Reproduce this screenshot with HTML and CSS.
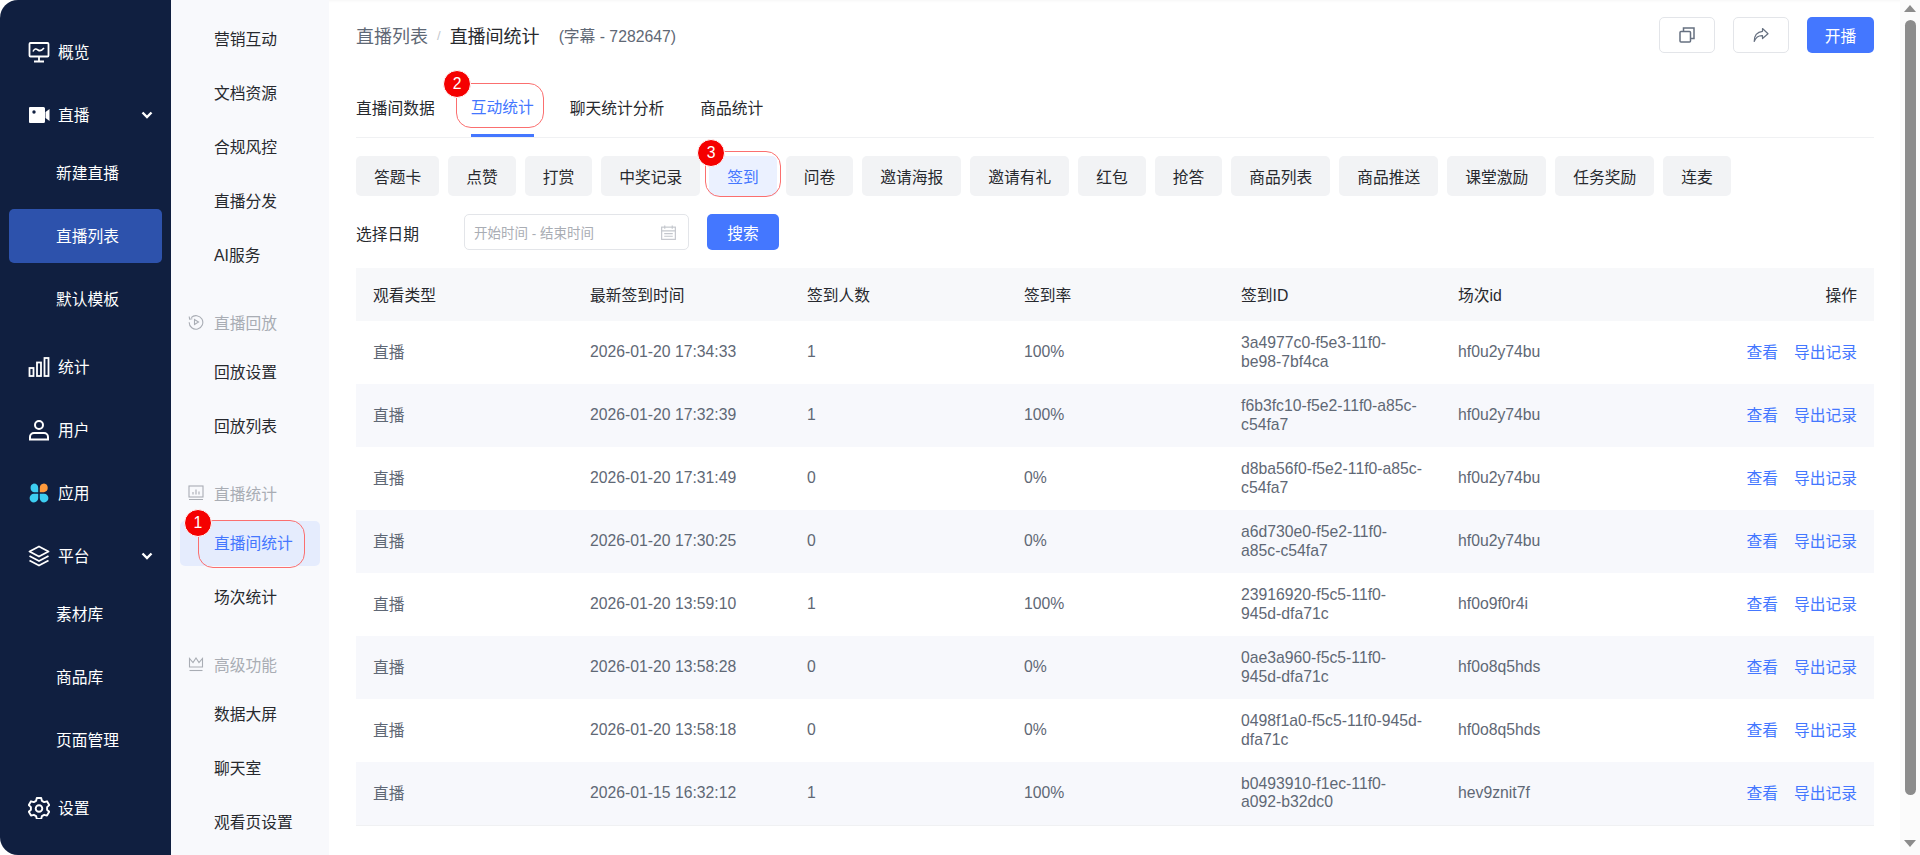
FILE: index.html
```html
<!DOCTYPE html>
<html lang="zh-CN">
<head>
    <meta charset="UTF-8">
    <meta name="viewport" content="width=device-width, initial-scale=1.0">
    <title>直播间统计</title>
    <link rel="stylesheet" href="styles.css">
</head>
<body>
    <div class="app">
        <!-- Main nav -->
        <nav class="sidebar">
            <a class="nav-item">
                <svg class="nav-icon" viewBox="0 0 22 22" fill="none" stroke="#fff" stroke-width="1.8"><rect x="1.5" y="2" width="19" height="13.5" rx="1"/><path d="M5 10.5c1.5-3 3-3 5-1.5s3.5 1 6-2" stroke-width="1.6"/><path d="M11 15.5v5M6 20.5h10"/></svg>
                <span>概览</span>
            </a>
            <a class="nav-item">
                <svg class="nav-icon" viewBox="0 0 22 22"><path fill="#fff" d="M2 3h13.500a1.500 1.500 0 0 1 1.500 1.500v13a1.500 1.500 0 0 1-1.500 1.500H2a1 1 0 0 1-1-1V4a1 1 0 0 1 1-1zm15.500 5 4-3v12l-4-3z"/><circle cx="6" cy="8" r="1.700" fill="#101f40"/></svg>
                <span>直播</span>
                <svg class="chevron" viewBox="0 0 12 8" fill="none" stroke="#fff" stroke-width="2.400"><path d="M1.500 1.500 6 6l4.500-4.500"/></svg>
            </a>
            <div class="nav-sub">
                <a class="sub-item">新建直播</a>
                <a class="sub-item active">直播列表</a>
                <a class="sub-item">默认模板</a>
            </div>
            <a class="nav-item">
                <svg class="nav-icon" viewBox="0 0 22 22" fill="none" stroke="#fff" stroke-width="1.800"><rect x="1.500" y="12" width="4" height="8"/><rect x="9" y="6.500" width="4" height="13.500"/><rect x="16.500" y="2" width="4" height="18"/></svg>
                <span>统计</span>
            </a>
            <a class="nav-item">
                <svg class="nav-icon" viewBox="0 0 22 22" fill="none" stroke="#fff" stroke-width="2"><circle cx="11" cy="6" r="4"/><path d="M2 20.500v-2.500a4 4 0 0 1 4-4h10a4 4 0 0 1 4 4v2.500z"/></svg>
                <span>用户</span>
            </a>
            <a class="nav-item">
                <svg class="nav-icon" viewBox="0 0 22 22"><path fill="#3dcdf1" d="M5.800 1.500a4.600 4.600 0 0 1 4.400 4.500v4.200H6A4.500 4.500 0 0 1 5.800 1.500zM6 11.800h4.200V16A4.300 4.300 0 1 1 6 11.800zM11.800 11.800H16a4.300 4.300 0 1 1-4.200 4.300z"/><path fill="#ff9a3c" d="M16 1.500a4.400 4.400 0 0 1 0 8.700h-4.200V6A4.500 4.500 0 0 1 16 1.500z"/></svg>
                <span>应用</span>
            </a>
            <a class="nav-item">
                <svg class="nav-icon" viewBox="0 0 22 22" fill="none" stroke="#fff" stroke-width="1.800" stroke-linejoin="round"><path d="M11 1.500 20.500 6.500 11 11.500 1.500 6.500z"/><path d="M1.500 11 11 16l9.500-5M1.500 15.500 11 20.500l9.500-5"/></svg>
                <span>平台</span>
                <svg class="chevron" viewBox="0 0 12 8" fill="none" stroke="#fff" stroke-width="2.400"><path d="M1.500 1.500 6 6l4.500-4.500"/></svg>
            </a>
            <div class="nav-sub">
                <a class="sub-item">素材库</a>
                <a class="sub-item">商品库</a>
                <a class="sub-item">页面管理</a>
            </div>
            <a class="nav-item">
                <svg class="nav-icon" viewBox="0 0 22 22" fill="none" stroke="#fff" stroke-width="1.900" stroke-linejoin="round"><path d="M8.800 1.500h4.400l.7 2.800 2.300 1.300 2.800-.8 2.200 3.800-2.100 2 0 2.700 2.100 2-2.200 3.800-2.800-.8-2.300 1.300-.7 2.800H8.800l-.7-2.800-2.300-1.300-2.800.8L.800 15.300l2.100-2V10.600l-2.100-2L3 4.800l2.800.8 2.300-1.300z" transform="translate(0 -.5)"/><circle cx="11" cy="11.500" r="3.300"/></svg>
                <span>设置</span>
            </a>
        </nav>

        <!-- Second level nav -->
        <aside class="subnav">
            <a class="side-item">营销互动</a>
            <a class="side-item">文档资源</a>
            <a class="side-item">合规风控</a>
            <a class="side-item">直播分发</a>
            <a class="side-item">AI服务</a>
            <div class="side-title">
                <svg class="side-icon" viewBox="0 0 16 16" fill="none" stroke="#a9adb4" stroke-width="1.100"><path d="M3.200 3.600A6.800 6.800 0 1 1 1.200 8.300"/><path d="M1.200 2.500l.4 2.700 2.700-.4"/><path d="M6.500 5.500v5l4-2.500z"/></svg>
                <span>直播回放</span>
            </div>
            <a class="side-item">回放设置</a>
            <a class="side-item">回放列表</a>
            <div class="side-title">
                <svg class="side-icon" viewBox="0 0 16 16" fill="none" stroke="#a9adb4" stroke-width="1.100"><rect x="1" y="1" width="14" height="11"/><path d="M1 14.500h14M5 9.500V7M8 9.500V4.500M11 9.500V6.500"/></svg>
                <span>直播统计</span>
            </div>
            <a class="side-item active">
                直播间统计
                <span class="mark mark-side"><b class="badge badge-side">1</b></span>
            </a>
            <a class="side-item">场次统计</a>
            <div class="side-title">
                <svg class="side-icon" viewBox="0 0 16 16" fill="none" stroke="#a9adb4" stroke-width="1.100"><path d="M1.500 2.500v8.500h13V2.500L11 6.500 8 2 5 6.500z"/><path d="M1.500 14.500h13"/></svg>
                <span>高级功能</span>
            </div>
            <a class="side-item">数据大屏</a>
            <a class="side-item">聊天室</a>
            <a class="side-item">观看页设置</a>
        </aside>

        <main class="content">
            <header class="top-bar">
                <div class="breadcrumb">
                    <span class="crumb">直播列表</span>
                    <span class="crumb-sep">/</span>
                    <span class="crumb-current">直播间统计</span>
                    <span class="crumb-note">(字幕 - 7282647)</span>
                </div>
                <div class="top-actions">
                    <button class="icon-btn">
                        <svg viewBox="0 0 16 16" fill="none" stroke="#667080" stroke-width="1.500"><rect x="1" y="4.500" width="10.500" height="10.500" rx="1"/><path d="M4.500 4.500V1H15v10.500h-3.500"/></svg>
                    </button>
                    <button class="icon-btn">
                        <svg viewBox="0 0 16 16" fill="none" stroke="#667080" stroke-width="1.200" stroke-linejoin="round"><path d="M9.500 1.500 15 6.800 9.500 11.500V8.700C6 8.500 3 10 1.200 14.500 1 9 4 4.700 9.500 4.300z"/></svg>
                    </button>
                    <button class="primary-btn">开播</button>
                </div>
            </header>

            <div class="tabs">
                <a class="tab">直播间数据</a>
                <a class="tab active">
                    互动统计
                    <span class="mark mark-tab"><b class="badge badge-tab">2</b></span>
                </a>
                <a class="tab">聊天统计分析</a>
                <a class="tab">商品统计</a>
            </div>

            <div class="pills">
                <a class="pill">答题卡</a>
                <a class="pill">点赞</a>
                <a class="pill">打赏</a>
                <a class="pill">中奖记录</a>
                <a class="pill active">
                    签到
                    <span class="mark mark-pill"><b class="badge badge-pill">3</b></span>
                </a>
                <a class="pill">问卷</a>
                <a class="pill">邀请海报</a>
                <a class="pill">邀请有礼</a>
                <a class="pill">红包</a>
                <a class="pill">抢答</a>
                <a class="pill">商品列表</a>
                <a class="pill">商品推送</a>
                <a class="pill">课堂激励</a>
                <a class="pill">任务奖励</a>
                <a class="pill">连麦</a>
            </div>

            <form class="filter">
                <label class="filter-label">选择日期</label>
                <div class="date-input">
                    <span>开始时间 - 结束时间</span>
                    <svg viewBox="0 0 14 14" fill="none" stroke="#c4c7cd" stroke-width="1.100"><rect x=".6" y="2" width="12.800" height="11.400"/><path d="M.6 5.500h12.800M3.500 .5v3M10.500 .5v3M3 8h8M3 10.500h8"/></svg>
                </div>
                <button type="button" class="search-btn">搜索</button>
            </form>

            <table class="data-table">
                <thead>
                    <tr>
                        <th>观看类型</th>
                        <th>最新签到时间</th>
                        <th>签到人数</th>
                        <th>签到率</th>
                        <th>签到ID</th>
                        <th>场次id</th>
                        <th class="col-ops">操作</th>
                    </tr>
                </thead>
                <tbody>
                    <tr>
                        <td class="cjk">直播</td><td>2026-01-20 17:34:33</td><td>1</td><td>100%</td>
                        <td>3a4977c0-f5e3-11f0-be98-7bf4ca</td><td>hf0u2y74bu</td>
                        <td class="col-ops cjk"><a class="link">查看</a><a class="link">导出记录</a></td>
                    </tr>
                    <tr>
                        <td class="cjk">直播</td><td>2026-01-20 17:32:39</td><td>1</td><td>100%</td>
                        <td>f6b3fc10-f5e2-11f0-a85c-c54fa7</td><td>hf0u2y74bu</td>
                        <td class="col-ops cjk"><a class="link">查看</a><a class="link">导出记录</a></td>
                    </tr>
                    <tr>
                        <td class="cjk">直播</td><td>2026-01-20 17:31:49</td><td>0</td><td>0%</td>
                        <td>d8ba56f0-f5e2-11f0-a85c-c54fa7</td><td>hf0u2y74bu</td>
                        <td class="col-ops cjk"><a class="link">查看</a><a class="link">导出记录</a></td>
                    </tr>
                    <tr>
                        <td class="cjk">直播</td><td>2026-01-20 17:30:25</td><td>0</td><td>0%</td>
                        <td>a6d730e0-f5e2-11f0-a85c-c54fa7</td><td>hf0u2y74bu</td>
                        <td class="col-ops cjk"><a class="link">查看</a><a class="link">导出记录</a></td>
                    </tr>
                    <tr>
                        <td class="cjk">直播</td><td>2026-01-20 13:59:10</td><td>1</td><td>100%</td>
                        <td>23916920-f5c5-11f0-945d-dfa71c</td><td>hf0o9f0r4i</td>
                        <td class="col-ops cjk"><a class="link">查看</a><a class="link">导出记录</a></td>
                    </tr>
                    <tr>
                        <td class="cjk">直播</td><td>2026-01-20 13:58:28</td><td>0</td><td>0%</td>
                        <td>0ae3a960-f5c5-11f0-945d-dfa71c</td><td>hf0o8q5hds</td>
                        <td class="col-ops cjk"><a class="link">查看</a><a class="link">导出记录</a></td>
                    </tr>
                    <tr>
                        <td class="cjk">直播</td><td>2026-01-20 13:58:18</td><td>0</td><td>0%</td>
                        <td>0498f1a0-f5c5-11f0-945d-dfa71c</td><td>hf0o8q5hds</td>
                        <td class="col-ops cjk"><a class="link">查看</a><a class="link">导出记录</a></td>
                    </tr>
                    <tr>
                        <td class="cjk">直播</td><td>2026-01-15 16:32:12</td><td>1</td><td>100%</td>
                        <td>b0493910-f1ec-11f0-a092-b32dc0</td><td>hev9znit7f</td>
                        <td class="col-ops cjk"><a class="link">查看</a><a class="link">导出记录</a></td>
                    </tr>
                </tbody>
            </table>
        </main>

        <!-- Window scrollbar -->
        <div class="scrollbar">
            <span class="arrow-up"></span>
            <span class="thumb"></span>
            <span class="arrow-down"></span>
        </div>
    </div>
</body>
</html>
```

FILE: styles.css
```css
* {
    box-sizing: border-box;
}

html, body {
    margin: 0;
    padding: 0;
    height: 855px;
    overflow: hidden;
    background-color: #ffffff;
}

body {
    font-family: "Liberation Sans", "Noto Sans CJK SC", sans-serif;
    font-size: 15.75px;
    color: #27292e;
}

.app {
    display: grid;
    grid-template-columns: 171px 158px 1fr 20px;
    height: 855px;
}

/* Main nav */
.sidebar {
    background-color: #101f40;
    color: #ffffff;
    border-radius: 18px 0 0 18px;
    padding: 25px 9px 0;
    display: flex;
    flex-direction: column;
}

.nav-item {
    display: flex;
    align-items: center;
    flex: none;
    height: 54px;
    margin-bottom: 9px;
    padding-left: 19px;
}

.nav-item span {
    margin-top: -1px;
}

.nav-icon {
    width: 22px;
    height: 22px;
    margin-right: 8px;
}

.chevron {
    width: 12px;
    height: 8px;
    margin-left: 51px;
}

.nav-sub {
    margin: -5px 0 5px;
}

.sub-item {
    display: flex;
    align-items: center;
    height: 54px;
    margin-bottom: 9px;
    padding: 0 0 1px 47px;
    border-radius: 5px;
}

.sub-item.active {
    background-color: #2d52ac;
}

/* Second level nav */
.subnav {
    background-color: #f8f9fc;
    padding: 16.5px 9px 0;
}

.side-item {
    position: relative;
    display: flex;
    align-items: center;
    height: 45px;
    margin-bottom: 9px;
    padding: 0 0 1px 34px;
    border-radius: 5px;
}

.side-item.active {
    background-color: #e5ecfd;
    color: #4477ff;
}

.side-title {
    display: flex;
    align-items: center;
    height: 36px;
    margin: 26.5px 0 9.5px;
    padding-left: 8px;
    color: #a9adb4;
}

.side-icon {
    width: 16px;
    height: 16px;
    margin-right: 10px;
}

/* Content */
.content {
    padding: 17px 26px 0 27px;
    min-width: 0;
    box-shadow: inset 0 3px 3px -2px rgba(0, 0, 0, 0.04);
}

.top-bar {
    display: flex;
    justify-content: space-between;
    align-items: center;
    height: 36px;
}

.breadcrumb {
    display: flex;
    align-items: center;
}

.crumb {
    font-size: 18px;
    color: #5f6875;
}

.crumb-sep {
    margin: 0 9px 0 9px;
    color: #c4c7cd;
    font-size: 13px;
}

.crumb-current {
    font-size: 18px;
    color: #27292e;
}

.crumb-note {
    margin-left: 19px;
    font-size: 15.75px;
    color: #5f6875;
}

.top-actions {
    display: flex;
    gap: 18px;
}

.icon-btn {
    display: flex;
    align-items: center;
    justify-content: center;
    width: 56px;
    height: 36px;
    padding: 0;
    background-color: #ffffff;
    border: 1px solid #e3e5e9;
    border-radius: 5px;
}

.icon-btn svg {
    width: 16px;
    height: 16px;
}

.primary-btn, .search-btn {
    height: 36px;
    padding: 0;
    background-color: #4477ff;
    color: #ffffff;
    border: none;
    border-radius: 5px;
    font: inherit;
}

.primary-btn {
    width: 67px;
}

.search-btn {
    width: 72px;
    margin-left: 18px;
}

/* Tabs */
.tabs {
    display: flex;
    gap: 36px;
    height: 60px;
    margin-top: 25px;
    border-bottom: 1px solid #f0f1f3;
}

.tab {
    position: relative;
    display: flex;
    align-items: center;
    height: 59px;
    padding-bottom: 1px;
}

.tab.active {
    color: #4477ff;
    border-bottom: 3px solid #4477ff;
    padding: 1px 0 0;
}

/* Pills */
.pills {
    display: flex;
    gap: 9px;
    margin-top: 18px;
}

.pill {
    position: relative;
    display: flex;
    align-items: center;
    height: 40px;
    padding: 0 18px;
    background-color: #f2f3f5;
    border-radius: 5px;
}

.pill.active {
    background-color: #ebf1ff;
    color: #4477ff;
}

/* Red annotations drawn over the screenshot */
.mark {
    position: absolute;
    border: 1.5px solid #fb6f6f;
    border-radius: 15px;
}

.mark-side {
    left: 18px;
    right: 15px;
    top: -1px;
    bottom: -2px;
}

.mark-tab {
    left: -14.5px;
    right: -10.5px;
    top: 5px;
    bottom: 6px;
}

.mark-pill {
    left: -4px;
    right: -4px;
    top: -5px;
    bottom: -1px;
}

.badge {
    position: absolute;
    display: flex;
    align-items: center;
    justify-content: center;
    width: 28px;
    height: 28px;
    background-color: #f50000;
    border: 1.5px solid #ffffff;
    border-radius: 50%;
    color: #ffffff;
    font-size: 15.75px;
    font-weight: normal;
}

.badge-side {
    left: -15px;
    top: -12px;
}

.badge-tab {
    left: -14px;
    top: -14.5px;
}

.badge-pill {
    left: -9px;
    top: -13.5px;
}

/* Filter */
.filter {
    display: flex;
    align-items: center;
    margin: 18px 0;
}

.filter-label {
    width: 108px;
    padding-top: 2px;
}

.date-input {
    display: flex;
    justify-content: space-between;
    align-items: center;
    width: 225px;
    height: 36px;
    padding: 0 12px 0 9px;
    border: 1px solid #e3e5e9;
    border-radius: 5px;
    font-size: 13.5px;
    color: #a9adb4;
}

.date-input svg {
    width: 15px;
    height: 15px;
}

/* Table */
.data-table {
    width: 100%;
    border-collapse: collapse;
    table-layout: fixed;
}

.data-table th {
    height: 53px;
    padding: 0 17px 0 18px;
    background-color: #f7f8fa;
    font-weight: normal;
    text-align: left;
}

.data-table th:nth-child(-n+6), .data-table td:nth-child(-n+6) {
    width: 217px;
}

.data-table th:first-child, .data-table td:first-child {
    width: 216px;
    padding-left: 17px;
}

.data-table td {
    height: 63px;
    padding: 0 15px 0 18px;
    color: #5f6875;
    line-height: 18.4px;
}

.data-table td.cjk {
    padding-top: 2px;
}

.data-table tbody tr:nth-child(even) td {
    background-color: #f7f8fc;
}

.data-table tbody tr:last-child td {
    border-bottom: 1px solid #f0f1f3;
}

.data-table .col-ops {
    text-align: right;
    padding-right: 17px;
}

.link {
    margin-left: 16px;
    color: #4477ff;
}

/* Scrollbar */
.scrollbar {
    display: flex;
    flex-direction: column;
    align-items: center;
    background-color: #fbfbfb;
    padding-top: 5px;
}

.arrow-up, .arrow-down {
    width: 0;
    height: 0;
    border-left: 6.5px solid transparent;
    border-right: 6.5px solid transparent;
}

.arrow-up {
    border-bottom: 7px solid #8c8c8c;
}

.arrow-down {
    margin-top: 45px;
    border-top: 7px solid #8c8c8c;
}

.thumb {
    width: 11px;
    height: 775px;
    margin-top: 8px;
    background-color: #8c8c8c;
    border-radius: 5.5px;
}
```
